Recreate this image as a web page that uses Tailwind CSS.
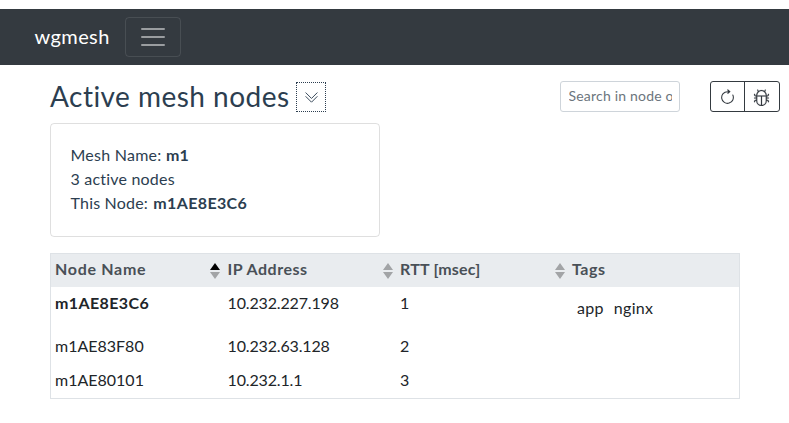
<!DOCTYPE html>
<html lang="en">
<head>
<meta charset="utf-8">
<title>wgmesh</title>
<script src="https://cdn.jsdelivr.net/npm/@tailwindcss/browser@4"></script>
</head>
<body class="h-[423px] overflow-hidden bg-white pt-[9px] font-['Lato',sans-serif] text-[16px] leading-6 text-[#2c3e50]">
<nav class="flex h-14 items-center bg-[#343a40] pl-[34.5px]">
  <a class="w-[90.5px] whitespace-nowrap pb-[3px] text-[20px] leading-[30px] tracking-[0.4px] text-white">wgmesh</a>
  <button class="flex h-10 w-14 items-center justify-center rounded border border-white/10">
    <svg class="size-[30px]" viewBox="0 0 30 30" fill="none" stroke="white" stroke-opacity=".5" stroke-width="2" stroke-linecap="round"><path d="M4 7h22M4 15h22M4 23h22"/></svg>
  </button>
</nav>
<main class="pl-[50px]">
  <div class="flex h-[58px] items-start pt-4">
    <h1 class="w-[246px] whitespace-nowrap text-[28px] leading-[31px] tracking-[0.47px]">Active mesh nodes</h1>
    <button class="mt-px flex size-[30px] items-center justify-center border border-dotted border-[#2c3e50]">
      <svg class="size-[15px]" viewBox="0 0 16 16" fill="none" stroke="currentColor" stroke-width="1" stroke-linecap="round" stroke-linejoin="round"><path d="M2 3l6 6 6-6M2 7l6 6 6-6"/></svg>
    </button>
    <input class="ml-[234px] h-[31px] w-[120px] rounded-[3px] border border-[#ced4da] px-[7.5px] pb-[2px] text-[14px] tracking-[0.2px] placeholder:text-[#6c757d]" placeholder="Search in node or tags">
    <div class="ml-[30px] flex h-[31px] w-[70px] rounded-[3px] border border-[#343a40] text-[#343a40]">
      <button class="flex w-[34px] items-center justify-center border-r border-[#343a40] pt-px">
        <svg class="size-[17px]" viewBox="0 0 16 16" fill="currentColor"><path d="M8 3a5 5 0 1 0 4.546 2.914.5.5 0 0 1 .908-.417A6 6 0 1 1 8 2v1z"/><path d="M8 4.466V.534a.25.25 0 0 1 .41-.192l2.36 1.966c.12.1.12.284 0 .384L8.41 4.658A.25.25 0 0 1 8 4.466z"/></svg>
      </button>
      <button class="flex w-[34px] items-center justify-center pt-[2px]">
        <svg class="size-[17px] -ml-px" viewBox="0 0 16 16" fill="currentColor" stroke="currentColor" stroke-width=".15"><path d="M4.355.522a.5.5 0 0 1 .623.333l.291.956A4.979 4.979 0 0 1 8 1c1.007 0 1.946.298 2.731.811l.29-.956a.5.5 0 1 1 .957.29l-.41 1.352A4.985 4.985 0 0 1 13 6h.5a.5.5 0 0 0 .5-.5V5a.5.5 0 0 1 1 0v.5A1.5 1.5 0 0 1 13.5 7H13v1h1.5a.5.5 0 0 1 0 1H13v1h.5a1.5 1.5 0 0 1 1.5 1.5v.5a.5.5 0 1 1-1 0v-.5a.5.5 0 0 0-.5-.5H13a5 5 0 0 1-10 0h-.5a.5.5 0 0 0-.5.5v.5a.5.5 0 1 1-1 0v-.5A1.5 1.5 0 0 1 2.5 10H3V9H1.5a.5.5 0 0 1 0-1H3V7h-.5A1.5 1.5 0 0 1 1 5.5V5a.5.5 0 0 1 1 0v.5a.5.5 0 0 0 .5.5H3c0-1.364.547-2.601 1.432-3.503l-.41-1.352a.5.5 0 0 1 .333-.623zM4 7v4a4 4 0 0 0 3.5 3.97V7H4zm4.5 0v7.97A4 4 0 0 0 12 11V7H8.5zM12 6a3.989 3.989 0 0 0-1.334-2.982A3.983 3.983 0 0 0 8 2a3.983 3.983 0 0 0-2.667 1.018A3.989 3.989 0 0 0 4 6h8z"/></svg>
      </button>
    </div>
  </div>
  <section class="h-[114px] w-[330px] rounded border border-black/[.125] px-[19.5px] pt-[19px]">
    <p class="tracking-[0.25px]">Mesh Name: <b>m1</b></p>
    <p class="tracking-[0.2px]">3 active nodes</p>
    <p class="tracking-[0.2px]">This Node: <b class="ml-px tracking-[0.35px]">m1AE8E3C6</b></p>
  </section>
  <table class="mt-4 w-[690px] table-fixed border-separate border-spacing-0 border border-[#dee2e6] text-left text-[#212529]">
    <colgroup><col class="w-[172px]"><col class="w-[172px]"><col class="w-[172px]"><col></colgroup>
    <thead class="bg-[#e9ecef] text-[#495057]">
      <tr class="h-[33px]">
        <th class="p-0 pl-1"><div class="flex items-center justify-between pr-[3px]"><span class="pb-[3px] tracking-[0.7px]">Node Name</span><svg class="h-4 w-[10px]" viewBox="0 0 10 16"><path d="M0 7l5-7 5 7z"/><path d="M0 9h10l-5 7z" fill="#a2a4a6"/></svg></div></th>
        <th class="p-0 pl-[4.5px]"><div class="flex items-center justify-between pr-[2.5px]"><span class="pb-[3px] tracking-[0.5px]">IP Address</span><svg class="h-4 w-[10px]" viewBox="0 0 10 16" fill="#a2a4a6"><path d="M0 7l5-7 5 7zM0 9h10l-5 7z"/></svg></div></th>
        <th class="p-0 pl-[5px]"><div class="flex items-center justify-between pr-[2.5px]"><span class="pb-[3px] tracking-[0.2px]">RTT [msec]</span><svg class="h-4 w-[10px]" viewBox="0 0 10 16" fill="#a2a4a6"><path d="M0 7l5-7 5 7zM0 9h10l-5 7z"/></svg></div></th>
        <th class="p-0 pb-[3px] pl-[5px] tracking-[0.5px]">Tags</th>
      </tr>
    </thead>
    <tbody class="align-top">
      <tr class="h-[43px]">
        <td class="p-0 pt-[4px] pl-1 font-bold tracking-[0.4px]">m1AE8E3C6</td><td class="p-0 pt-[4px] pl-[4.5px] tracking-[-0.15px]">10.232.227.198</td><td class="p-0 pt-[4px] pl-[5px]">1</td>
        <td class="p-0 pt-[9px] pl-[10px]"><div class="flex gap-[10px] tracking-[0.3px]"><span>app</span><span>nginx</span></div></td>
      </tr>
      <tr class="h-[34px]"><td class="p-0 pt-[4px] pl-1">m1AE83F80</td><td class="p-0 pt-[4px] pl-[4.5px] tracking-[-0.15px]">10.232.63.128</td><td class="p-0 pt-[4px] pl-[5px]">2</td><td></td></tr>
      <tr class="h-[34px]"><td class="p-0 pt-[4px] pl-1">m1AE80101</td><td class="p-0 pt-[4px] pl-[4.5px] tracking-[-0.15px]">10.232.1.1</td><td class="p-0 pt-[4px] pl-[5px]">3</td><td></td></tr>
    </tbody>
  </table>
</main>
</body>
</html>
